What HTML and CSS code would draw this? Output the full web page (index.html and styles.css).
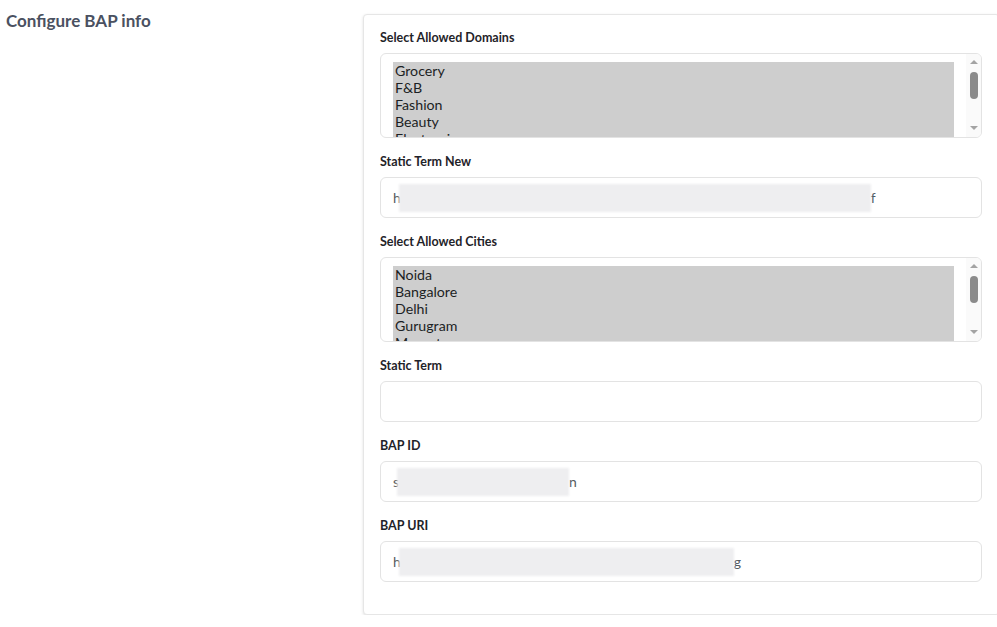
FILE: index.html
```html
<!DOCTYPE html>
<html lang="en">
<head>
<meta charset="utf-8">
<title>Configure BAP info</title>
<link rel="stylesheet" href="styles.css">
</head>
<body>
<div class="page">
  <div class="side">
    <h2 class="title">Configure BAP info</h2>
  </div>
  <div class="card">
    <div class="group">
      <label class="label">Select Allowed Domains</label>
      <div class="listbox">
        <div class="options">
          <div class="option">Grocery</div>
          <div class="option">F&amp;B</div>
          <div class="option">Fashion</div>
          <div class="option">Beauty</div>
          <div class="option">Electronics</div>
        </div>
        <div class="scrollbar">
          <span class="arrow up"></span>
          <span class="thumb"></span>
          <span class="arrow down"></span>
        </div>
      </div>
    </div>
    <div class="group">
      <label class="label">Static Term New</label>
      <div class="field"><span class="ch">h</span><span class="blur blur-wide"></span><span class="ch">f</span></div>
    </div>
    <div class="group">
      <label class="label">Select Allowed Cities</label>
      <div class="listbox">
        <div class="options">
          <div class="option">Noida</div>
          <div class="option">Bangalore</div>
          <div class="option">Delhi</div>
          <div class="option">Gurugram</div>
          <div class="option">Meerut</div>
        </div>
        <div class="scrollbar">
          <span class="arrow up"></span>
          <span class="thumb"></span>
          <span class="arrow down"></span>
        </div>
      </div>
    </div>
    <div class="group">
      <label class="label">Static Term</label>
      <div class="field"></div>
    </div>
    <div class="group">
      <label class="label">BAP ID</label>
      <div class="field"><span class="ch">s</span><span class="blur blur-short"></span><span class="ch">n</span></div>
    </div>
    <div class="group">
      <label class="label">BAP URI</label>
      <div class="field"><span class="ch">h</span><span class="blur blur-mid"></span><span class="ch">g</span></div>
    </div>
  </div>
</div>
</body>
</html>
```

FILE: styles.css
```css
html, body {
  margin: 0;
  padding: 0;
  overflow: hidden;
  background: #ffffff;
}

body {
  font-family: "Lato", "Open Sans", sans-serif;
  color: #212529;
}

.page {
  display: flex;
  align-items: flex-start;
  padding-top: 14px;
}

.side {
  width: 357px;
  flex: 0 0 357px;
  padding-left: 6px;
}

.title {
  margin: -3px 0 0 0;
  font-size: 17px;
  line-height: 20px;
  font-weight: 700;
  color: #4a5161;
}

.card {
  flex: 0 0 auto;
  width: 637px;
  box-sizing: border-box;
  border: 1px solid #e6e6e6;
  border-radius: 4px;
  box-shadow: 0 1px 3px rgba(0, 0, 0, 0.12);
  padding: 14px 17px 17px 16px;
  background: #fff;
}

.group {
  margin-bottom: 15px;
}

.label {
  display: block;
  font-size: 12.5px;
  line-height: 18px;
  font-weight: 700;
  color: #1f2329;
  margin-bottom: 6px;
}

.listbox {
  display: flex;
  width: 602px;
  height: 85px;
  box-sizing: border-box;
  border: 1px solid #e3e3e3;
  border-radius: 6px;
  overflow: hidden;
  background: #fff;
}

.options {
  flex: 1;
  margin: 0 12px;
  padding-top: 8px;
  overflow: hidden;
}

.option {
  background: #cecece;
  font-size: 14.2px;
  line-height: 17px;
  padding: 0 2px;
  color: #1c1f24;
  white-space: nowrap;
}

.scrollbar {
  flex: 0 0 15px;
  display: flex;
  flex-direction: column;
  align-items: center;
  background: #fafafa;
}

.arrow {
  width: 0;
  height: 0;
  border-left: 4px solid transparent;
  border-right: 4px solid transparent;
}

.arrow.up {
  margin-top: 6px;
  border-bottom: 4px solid #a3a3a3;
}

.arrow.down {
  margin-top: auto;
  margin-bottom: 7px;
  border-top: 4px solid #a3a3a3;
}

.thumb {
  margin-top: 8px;
  width: 8px;
  height: 27px;
  border-radius: 4px;
  background: #8b8b8b;
}

.field {
  display: flex;
  align-items: center;
  width: 602px;
  height: 41px;
  box-sizing: border-box;
  border: 1px solid #e3e3e3;
  border-radius: 6px;
  padding: 0 12px;
  font-size: 14px;
  color: #555a60;
  overflow: hidden;
}

.ch {
  line-height: 17px;
}

.blur {
  display: inline-block;
  height: 28px;
  margin-left: -2px;
  background: #eeeef0;
  filter: blur(1px);
}

.blur-wide {
  width: 472px;
}

.blur-short {
  width: 172px;
}

.blur-mid {
  width: 335px;
}
```
